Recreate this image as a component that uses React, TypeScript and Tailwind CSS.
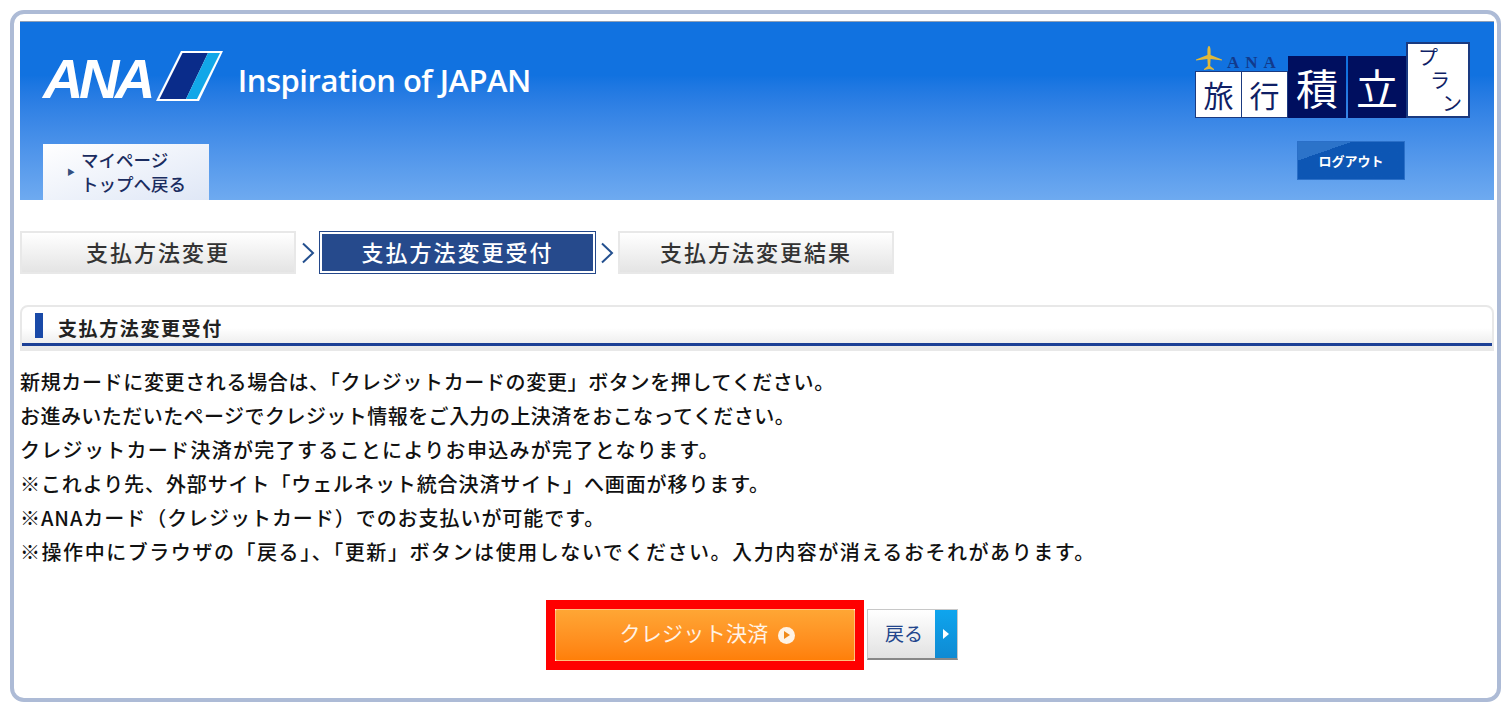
import React from 'react';

const lines = [
  { text: '新規カードに変更される場合は、「クレジットカードの変更」ボタンを押してください。', cls: 'tracking-[0.65px]' },
  { text: 'お進みいただいたページでクレジット情報をご入力の上決済をおこなってください。', cls: 'tracking-[0.45px]' },
  { text: 'クレジットカード決済が完了することによりお申込みが完了となります。', cls: 'tracking-[1.3px]' },
  { text: '※これより先、外部サイト「ウェルネット統合決済サイト」へ画面が移ります。', cls: 'tracking-[0.9px]' },
  { text: '※ANAカード（クレジットカード）でのお支払いが可能です。', cls: 'tracking-[0.95px]' },
  { text: '※操作中にブラウザの「戻る」、「更新」ボタンは使用しないでください。入力内容が消えるおそれがあります。', cls: 'tracking-[1.55px]' },
];

const Chevron: React.FC = () => (
  <svg width="14" height="22" viewBox="0 0 14 22" fill="none" className="shrink-0">
    <path d="M2 1.5 L12 11 L2 20.5" stroke="#24508f" strokeWidth="2" />
  </svg>
);

const Tab: React.FC<{ label: string }> = ({ label }) => (
  <div className="w-[276px] h-[43px] pb-[2px] flex items-center justify-center border-2 border-[#e8e8e8] bg-gradient-to-b from-white to-[#e4e4e4] text-[22px] tracking-[2px] text-[#333] font-medium">
    {label}
  </div>
);

const PlanLogo: React.FC = () => (
  <div className="flex items-end">
    <div className="flex flex-col w-[93px]">
      <div className="flex items-end h-[29px]">
        <svg width="28" height="25" viewBox="0 0 28 25" className="shrink-0">
          <path
            d="M14 0 C15 0 15.6 2 15.6 5 L15.6 9 L27 13.5 L27 14.5 L15.6 13 L15.2 20 L19 23 L19 24 L14 23 L9 24 L9 23 L12.8 20 L12.4 13 L1 14.5 L1 13.5 L12.4 9 L12.4 5 C12.4 2 13 0 14 0 Z"
            fill="#e0b83a"
          />
        </svg>
        <span className="ml-[4px] text-[17px] leading-[17px] font-bold tracking-[6px] text-[#123a8c] font-['Liberation_Serif',serif]">
          ANA
        </span>
      </div>
      <div className="flex h-[47px] border border-[#1a3a80] bg-[#1a3a80] gap-px">
        <div className="flex-1 bg-white flex items-center justify-center text-[30px] text-[#0f1f66]">旅</div>
        <div className="flex-1 bg-white flex items-center justify-center text-[30px] text-[#0f1f66]">行</div>
      </div>
    </div>
    <div className="w-[58px] h-[62px] bg-[#000f5f] flex items-center justify-center text-[42px] leading-none text-white">積</div>
    <div className="w-[58px] h-[62px] ml-[2px] bg-[#000f5f] flex items-center justify-center text-[42px] leading-none text-white">立</div>
    <div className="w-[64px] h-[76px] bg-white border-2 border-[#1a3a80] flex flex-col px-[6px] py-[1px] text-[20px] leading-[23px] text-[#0f1f66]">
      <span className="self-start ml-[4px]">プ</span>
      <span className="self-center ml-[4px]">ラ</span>
      <span className="self-end">ン</span>
    </div>
  </div>
);

export default function App() {
  return (
    <div className="w-[1510px] h-[712px] bg-white pt-[10px] pl-[10px] font-['Noto_Sans_CJK_JP',sans-serif] overflow-hidden">
      <div className="w-[1491px] h-[692px] border-4 border-[#adbbd6] rounded-[14px] bg-white pt-[7px] pl-[6px] pr-[3px]">
        <header className="h-[179px] border-t border-[#8f9fb5] bg-gradient-to-b from-[#1172e0] from-30% to-[#6eaaf0] flex justify-between pr-[24px]">
          <div className="flex flex-col justify-between pl-[23px]">
            <div className="flex items-end mt-[29px] h-[50px]">
              <span className="text-[56px] leading-[44px] font-bold italic tracking-[-4.5px] text-white font-['Liberation_Sans',sans-serif]">
                ANA
              </span>
              <svg width="67" height="50" viewBox="0 0 67 50" className="ml-[5px] shrink-0">
                <path d="M25 0 L67 0 L43 50 L0 50 Z" fill="#ffffff" />
                <path d="M26.5 2 L52 2 L30 48 L3.5 48 Z" fill="#0a2c8a" />
                <path d="M52 2 L64 2 L41 48 L30 48 Z" fill="#12a7e8" />
              </svg>
              <span className="ml-[15px] mb-[-1px] text-[31px] leading-[44px] text-white font-['Open_Sans',sans-serif] font-semibold tracking-[-0.5px]">
                Inspiration of JAPAN
              </span>
            </div>
            <button className="w-[166px] h-[56px] bg-gradient-to-br from-white to-[#dfe7f6] flex items-center pl-[24px] gap-[6px] text-[#1a2c60] text-[17.5px] leading-[24px] text-left font-medium">
              <span className="text-[8px] leading-none text-[#34507f]">▶</span>
              <span>
                マイページ
                <br />
                トップへ戻る
              </span>
            </button>
          </div>
          <div className="flex flex-col items-end pt-[20px]">
            <PlanLogo />
            <button className="w-[108px] h-[39px] mt-[23px] mr-[65px] bg-gradient-to-br from-[#2c73c9] from-25% to-[#0d56b4] to-25% border border-[#2a6fc8] flex items-center justify-center text-white text-[13px] font-bold">
              ログアウト
            </button>
          </div>
        </header>

        <nav className="flex items-center mt-[31px]">
          <Tab label="支払方法変更" />
          <div className="ml-[5px] mr-[4px]">
            <Chevron />
          </div>
          <div className="w-[277px] h-[43px] border border-[#24488a] p-px">
            <div className="w-full h-full pb-[2px] border border-white bg-[#264a8c] flex items-center justify-center text-[22px] tracking-[2px] text-white font-medium">
              支払方法変更受付
            </div>
          </div>
          <div className="ml-[4px] mr-[4px]">
            <Chevron />
          </div>
          <Tab label="支払方法変更結果" />
        </nav>

        <section className="mt-[31px] h-[46px] border-2 border-[#e8e8e8] rounded-t-[8px] bg-gradient-to-b from-white from-50% to-[#e8e8e8] flex flex-col">
          <div className="flex-1 flex items-center pl-[13px] gap-[15px]">
            <span className="w-[8px] h-[25px] bg-[#1a4aa8]" />
            <h2 className="text-[19px] leading-none font-bold tracking-[1.6px] text-[#222] mt-[5px]">支払方法変更受付</h2>
          </div>
          <div className="h-[3px] mb-[3px] bg-[#1c4096]" />
        </section>

        <div className="mt-[14px] flex flex-col">
          {lines.map((line) => (
            <p key={line.text} className={`text-[20px] leading-[34px] font-medium text-[#111] whitespace-nowrap ${line.cls}`}>
              {line.text}
            </p>
          ))}
        </div>

        <div className="flex items-start mt-[31px] pl-[526px]">
          <div className="border-[9px] border-[#ff0000]">
            <button className="w-[300px] h-[52px] pb-[4px] rounded-[2px] bg-gradient-to-b from-[#ffa634] to-[#ff7f08] border border-[#ffc07a] flex items-center justify-center gap-[9px] pl-[4px] text-[#fff3e6] text-[21px] tracking-[0.3px]">
              クレジット決済
              <span className="w-[17px] h-[17px] mt-[4px] rounded-full bg-[#fff3e6] flex items-center justify-center">
                <span className="w-0 h-0 border-y-[4px] border-y-transparent border-l-[6px] border-l-[#f08a1a] ml-[1px]" />
              </span>
            </button>
          </div>
          <button className="ml-[3px] mt-[9px] w-[91px] h-[51px] flex border border-[#c8c8c8] border-b-2 border-b-[#888]">
            <span className="flex-1 h-full pl-[5px] pb-[2px] bg-gradient-to-b from-white to-[#e2e2e2] flex items-center justify-center text-[19px] text-[#23468c]">
              戻る
            </span>
            <span className="w-[22px] h-full bg-gradient-to-b from-[#0ea5ee] to-[#0f8ad2] flex items-center justify-center">
              <span className="w-0 h-0 border-y-[5px] border-y-transparent border-l-[6px] border-l-white" />
            </span>
          </button>
        </div>
      </div>
    </div>
  );
}
